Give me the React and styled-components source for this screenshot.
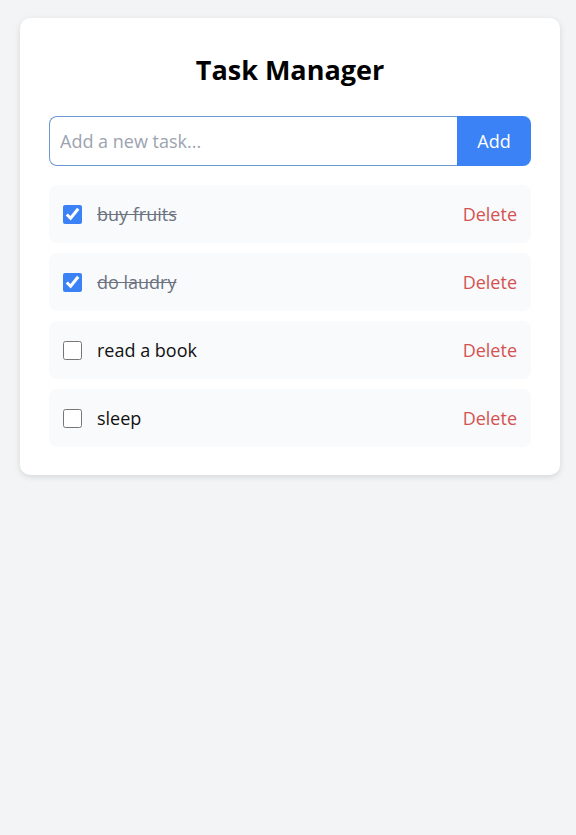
import React, { useState } from "react";
import styled, { createGlobalStyle } from "styled-components";

const GlobalStyle = createGlobalStyle`
  * { box-sizing: border-box; }
  body {
    margin: 0;
    background: #f3f4f6;
    font-family: "Open Sans", "Noto Sans", sans-serif;
  }
`;

const Page = styled.div`
  padding: 18px 16px 18px 20px;
  min-height: 835px;
`;

const Card = styled.main`
  width: 540px;
  background: #fff;
  border-radius: 10px;
  box-shadow: 0 2px 6px rgba(0, 0, 0, 0.12);
  padding: 34px 29px 28px;
`;

const Title = styled.h1`
  margin: 0 0 28px;
  text-align: center;
  font-size: 27px;
  font-weight: 700;
  color: #000;
  line-height: 36px;
`;

const Form = styled.form`
  display: flex;
  margin-bottom: 19px;
`;

const Input = styled.input`
  flex: 1;
  height: 50px;
  border: 1.5px solid #6a98d4;
  border-right: none;
  border-radius: 8px 0 0 8px;
  padding: 0 10px;
  font-family: inherit;
  font-size: 18px;
  color: #111;
  outline: none;
  &::placeholder { color: #9ca3af; }
`;

const AddButton = styled.button`
  width: 74px;
  height: 50px;
  border: none;
  border-radius: 0 8px 8px 0;
  background: #3b82f6;
  color: #fff;
  font-family: inherit;
  font-size: 18px;
  cursor: pointer;
`;

const List = styled.ul`
  list-style: none;
  margin: 0;
  padding: 0;
  display: flex;
  flex-direction: column;
  gap: 10px;
`;

const Item = styled.li`
  display: flex;
  align-items: center;
  height: 58px;
  padding: 0 14px;
  background: #f9fafb;
  border-radius: 8px;
`;

const Check = styled.input`
  width: 19px;
  height: 19px;
  margin: 0 15px 0 0;
  accent-color: #3b82f6;
`;

const Label = styled.span`
  flex: 1;
  font-size: 18px;
  color: ${(p) => (p.$done ? "#6b7280" : "#111")};
  text-decoration: ${(p) => (p.$done ? "line-through" : "none")};
`;

const DeleteButton = styled.button`
  border: none;
  background: none;
  padding: 0;
  color: #d35352;
  font-family: inherit;
  font-size: 18px;
  cursor: pointer;
`;

const initial = [
  { id: 1, text: "buy fruits", done: true },
  { id: 2, text: "do laudry", done: true },
  { id: 3, text: "read a book", done: false },
  { id: 4, text: "sleep", done: false },
];

export default function App() {
  const [tasks, setTasks] = useState(initial);
  const [value, setValue] = useState("");

  const add = (e) => {
    e.preventDefault();
    if (!value.trim()) return;
    setTasks([...tasks, { id: Date.now(), text: value.trim(), done: false }]);
    setValue("");
  };

  return (
    <Page>
      <GlobalStyle />
      <Card>
        <Title>Task Manager</Title>
        <Form onSubmit={add}>
          <Input
            placeholder="Add a new task..."
            value={value}
            onChange={(e) => setValue(e.target.value)}
          />
          <AddButton type="submit">Add</AddButton>
        </Form>
        <List>
          {tasks.map((t) => (
            <Item key={t.id}>
              <Check
                type="checkbox"
                checked={t.done}
                onChange={() =>
                  setTasks(tasks.map((x) => (x.id === t.id ? { ...x, done: !x.done } : x)))
                }
              />
              <Label $done={t.done}>{t.text}</Label>
              <DeleteButton onClick={() => setTasks(tasks.filter((x) => x.id !== t.id))}>
                Delete
              </DeleteButton>
            </Item>
          ))}
        </List>
      </Card>
    </Page>
  );
}
